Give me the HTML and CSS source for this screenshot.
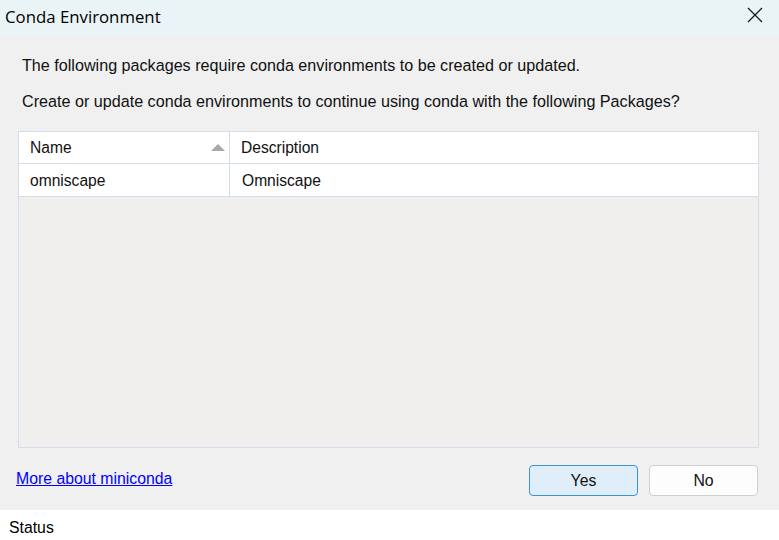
FILE: index.html
```html
<!DOCTYPE html>
<html>
<head>
<meta charset="utf-8">
<link rel="stylesheet" href="styles.css">
</head>
<body>
<div class="window">
  <div class="titlebar">
    <span class="title">Conda Environment</span>
    <svg class="close" width="16" height="16" viewBox="0 0 16 16"><path d="M1 1 L15 15 M15 1 L1 15" stroke="#1a1a1a" stroke-width="1.3" fill="none"/></svg>
  </div>
  <div class="content">
    <p class="msg first">The following packages require conda environments to be created or updated.</p>
    <p class="msg second">Create or update conda environments to continue using conda with the following Packages?</p>
    <div class="table">
      <div class="row head">
        <div class="cell c1">Name<svg class="sort" width="14" height="8" viewBox="0 0 14 8"><path d="M0 7 L7 0 L14 7 Z" fill="#a8a8a8"/></svg></div>
        <div class="cell c2">Description</div>
      </div>
      <div class="row data">
        <div class="cell c1">omniscape</div>
        <div class="cell c2">Omniscape</div>
      </div>
    </div>
    <div class="footer">
      <a class="link" href="#">More about miniconda</a>
      <div class="buttons">
        <button class="btn yes">Yes</button>
        <button class="btn no">No</button>
      </div>
    </div>
  </div>
  <div class="status">Status</div>
</div>
</body>
</html>
```
FILE: styles.css
```css
html, body {
  margin: 0;
  padding: 0;
}
body {
  width: 779px;
  height: 540px;
  overflow: hidden;
  font-family: "Liberation Sans", Arial, sans-serif;
  color: #000;
}
.window {
  display: flex;
  flex-direction: column;
  height: 540px;
}
.titlebar {
  height: 36px;
  background: #eaf4f7;
  display: flex;
  align-items: center;
  justify-content: space-between;
  padding: 0 16px 0 5px;
}
.title {
  font-family: "Open Sans", "Noto Sans", sans-serif;
  font-size: 16.8px;
  color: #000;
  margin-top: -4px;
}
.close {
  margin-top: -6px;
}
.content {
  flex: 1;
  background: #f0f0f0;
  display: flex;
  flex-direction: column;
  padding: 0 20px 0 18px;
}
.msg {
  margin: 0;
  font-size: 16.15px;
  padding-left: 4px;
  line-height: 18px;
  color: #111;
}
.msg.first {
  margin-top: 20px;
}
.msg.second {
  margin-top: 18px;
}
.table {
  margin-top: 21px;
  height: 317px;
  border: 1px solid #d5dcea;
  background: #f0efee;
  box-sizing: border-box;
}
.row {
  display: flex;
  height: 32px;
  background: #fff;
  border-bottom: 1px solid #d5dcea;
}
.row.head {
  height: 31px;
}
.row.data .cell {
  padding-top: 1px;
}
.cell {
  font-size: 15.6px;
  display: flex;
  align-items: center;
  box-sizing: border-box;
  color: #111;
}
.c1 {
  width: 211px;
  padding-left: 11px;
  border-right: 1px solid #d5dcea;
  justify-content: space-between;
  padding-right: 4px;
}
.c2 {
  flex: 1;
  padding-left: 12px;
}
.row.head .c2 {
  padding-left: 11px;
}
.footer {
  display: flex;
  justify-content: space-between;
  align-items: center;
  margin-top: 17px;
  padding-right: 1px;
}
.link {
  color: #0000ff;
  font-size: 15.8px;
  margin-left: -2px;
  margin-top: -4px;
}
.buttons {
  display: flex;
  gap: 11px;
}
.btn {
  width: 109px;
  height: 31px;
  font-family: "Liberation Sans", Arial, sans-serif;
  font-size: 15.8px;
  border-radius: 4px;
  color: #111;
  padding: 0;
}
.btn.yes {
  background: #e0eef9;
  border: 1px solid #3d93d9;
}
.btn.no {
  background: #fdfdfd;
  border: 1px solid #d0d0d0;
}
.status {
  height: 30px;
  background: #fff;
  font-size: 15.8px;
  padding-left: 9px;
  display: flex;
  align-items: center;
  line-height: 1;
  padding-top: 5px;
  box-sizing: border-box;
}
```
